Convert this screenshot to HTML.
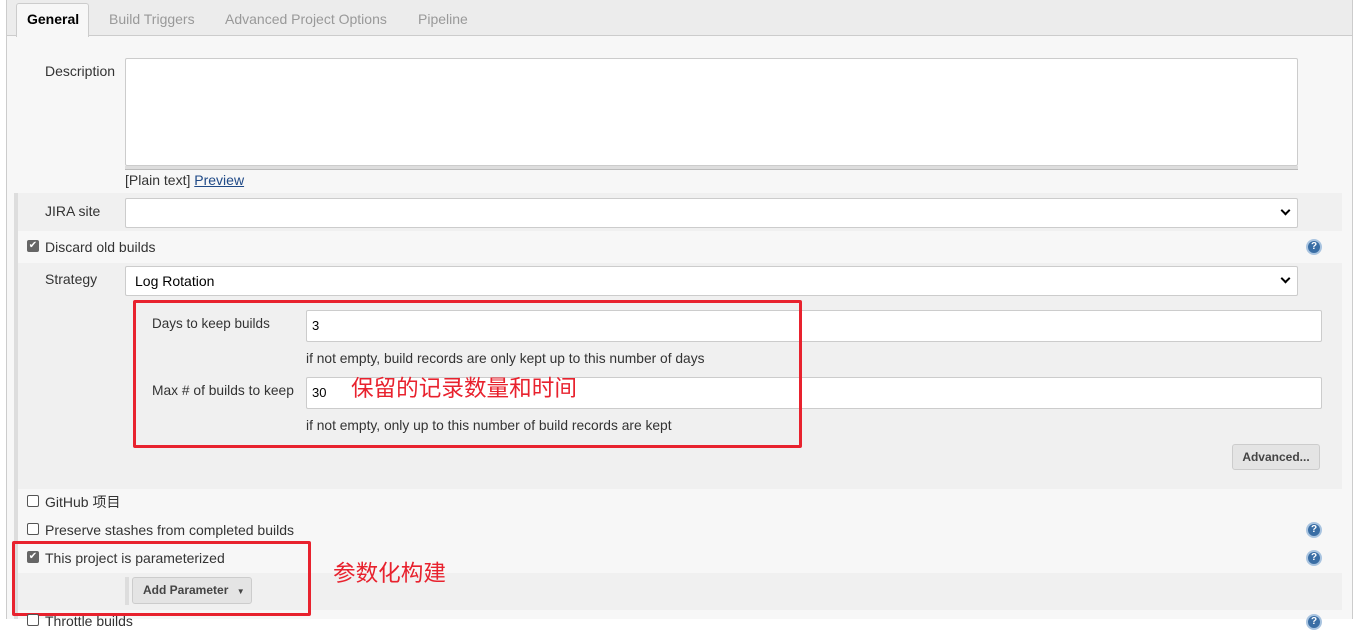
<!DOCTYPE html>
<html><head><meta charset="utf-8"><style>
*{box-sizing:border-box;margin:0;padding:0}
body{width:1359px;height:619px;overflow:hidden;background:#fff;font-family:"Liberation Sans","Noto Sans CJK SC",sans-serif;font-size:14px;line-height:16px;color:#333;position:relative}
.a{position:absolute}
.main{left:6px;top:0;width:1347px;height:619px;background:#f7f7f7;border-left:1px solid #ccc;border-right:1px solid #ccc}
.tabbar{left:7px;top:0;width:1345px;height:36px;background:#ececec;border-bottom:1px solid #ccc}
.tab{top:11px;font-size:14px;color:#999}
.inp{background:#fff;border:1px solid #ccc;border-radius:2px}
.sub{background:#f0f0f0}
.bar{background:#ddd}
.cb{width:12px;height:12px;border:1px solid #555;border-radius:2px;background:#fff}
.cbc{width:12px;height:12px;border-radius:2px;background:#666;color:#fff;font-size:10px;line-height:12px;text-align:center}
.help{width:16px;height:16px;border-radius:50%;background:#3a6ea5;border:2px solid #a9c4e0;color:#fff;font-size:10px;font-weight:bold;text-align:center;line-height:12px}
.red{border:3px solid #e8222e;border-radius:2px}
.chev{width:7px;height:7px;border-right:2px solid #000;border-bottom:2px solid #000;transform:rotate(45deg)}
.btn{background:#e4e4e4;border:1px solid #ccc;border-radius:3px;font-weight:bold;font-size:12px;color:#444}
</style></head><body>
<div class="a main"></div>
<div class="a tabbar"></div>
<div class="a" style="left:16px;top:3px;width:73px;height:34px;background:#f7f7f7;border:1px solid #ccc;border-bottom:none;border-radius:3px 3px 0 0"></div>
<div class="a tab" style="left:27px;color:#000;font-weight:bold">General</div>
<div class="a tab" style="left:109px">Build Triggers</div>
<div class="a tab" style="left:225px">Advanced Project Options</div>
<div class="a tab" style="left:418px">Pipeline</div>

<div class="a" style="left:45px;top:63px">Description</div>
<div class="a inp" style="left:125px;top:58px;width:1173px;height:108px"></div>
<div class="a" style="left:125px;top:166px;width:1173px;height:4px;background:#ddd;border-bottom:1px solid #bbb"></div>
<div class="a" style="left:125px;top:172px">[Plain text] <span style="color:#204a87;text-decoration:underline">Preview</span></div>

<div class="a sub" style="left:18px;top:193px;width:1324px;height:38px"></div>
<div class="a bar" style="left:14px;top:193px;width:4px;height:426px"></div>
<div class="a" style="left:45px;top:203px">JIRA site</div>
<div class="a inp" style="left:125px;top:198px;width:1173px;height:30px"></div>
<div class="a chev" style="left:1282px;top:207px"></div>

<div class="a cbc" style="left:27px;top:240px">✔</div>
<div class="a" style="left:45px;top:239px">Discard old builds</div>
<div class="a help" style="left:1306px;top:239px">?</div>

<div class="a sub" style="left:18px;top:263px;width:1324px;height:226px"></div>
<div class="a" style="left:45px;top:271px">Strategy</div>
<div class="a inp" style="left:125px;top:266px;width:1173px;height:30px"></div>
<div class="a" style="left:135px;top:273px;color:#000">Log Rotation</div>
<div class="a chev" style="left:1282px;top:275px"></div>

<div class="a" style="left:152px;top:316px;font-size:13.5px">Days to keep builds</div>
<div class="a inp" style="left:306px;top:310px;width:1016px;height:32px"></div>
<div class="a" style="left:312px;top:318px;color:#000;font-size:13px">3</div>
<div class="a" style="left:306px;top:351px;font-size:13.8px">if not empty, build records are only kept up to this number of days</div>
<div class="a" style="left:152px;top:383px;font-size:13.8px">Max # of builds to keep</div>
<div class="a inp" style="left:306px;top:377px;width:1016px;height:32px"></div>
<div class="a" style="left:312px;top:385px;color:#000;font-size:13px">30</div>
<div class="a" style="left:306px;top:418px;font-size:13.8px">if not empty, only up to this number of build records are kept</div>
<div class="a btn" style="left:1232px;top:444px;width:88px;height:26px;line-height:24px;text-align:center">Advanced...</div>
<div class="a red" style="left:133px;top:300px;width:669px;height:148px"></div>
<div class="a" style="left:351px;top:376px;color:#e8222e;font-size:22.6px;line-height:26px">保留的记录数量和时间</div>

<div class="a cb" style="left:27px;top:495px"></div>
<div class="a" style="left:45px;top:494px">GitHub 项目</div>
<div class="a cb" style="left:27px;top:523px"></div>
<div class="a" style="left:45px;top:522px">Preserve stashes from completed builds</div>
<div class="a help" style="left:1306px;top:522px">?</div>
<div class="a cbc" style="left:27px;top:551px">✔</div>
<div class="a" style="left:45px;top:550px">This project is parameterized</div>
<div class="a help" style="left:1306px;top:550px">?</div>
<div class="a sub" style="left:18px;top:573px;width:1324px;height:37px"></div>
<div class="a bar" style="left:125px;top:577px;width:4px;height:28px"></div>
<div class="a btn" style="left:132px;top:577px;width:120px;height:27px;line-height:25px;padding-left:10px">Add Parameter <span style="font-size:8px;margin-left:5px">▼</span></div>
<div class="a red" style="left:12px;top:541px;width:299px;height:75px"></div>
<div class="a" style="left:333px;top:561px;color:#e8222e;font-size:22.6px;line-height:26px">参数化构建</div>
<div class="a cb" style="left:27px;top:614px"></div>
<div class="a" style="left:45px;top:613px">Throttle builds</div>
<div class="a help" style="left:1306px;top:614px">?</div>
</body></html>
